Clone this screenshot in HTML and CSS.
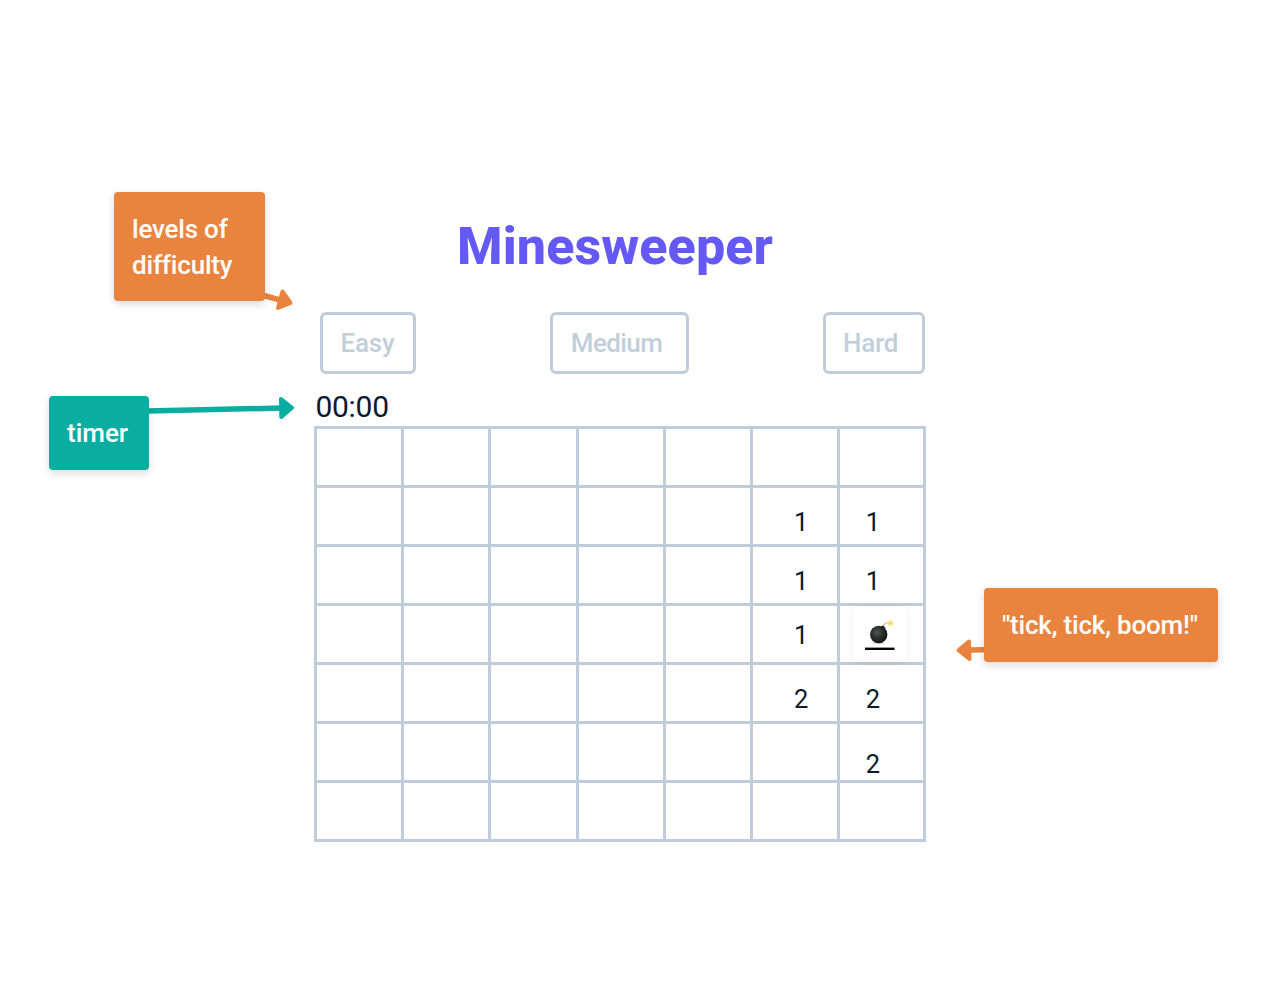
FILE: index.html
```html
<!DOCTYPE html>
<html lang="en">
<head>
<meta charset="utf-8">
<title>Minesweeper</title>
<link rel="stylesheet" href="styles.css">
</head>
<body>
<main class="game">
  <h1 class="title">Minesweeper</h1>
  <div class="levels">
    <button class="level easy">Easy</button>
    <button class="level medium">Medium</button>
    <button class="level hard">Hard</button>
  </div>
  <div class="clock">00:00</div>
  <div class="board">
    <i></i><i></i><i></i><i></i><i></i><i></i><i></i>
    <i></i><i></i><i></i><i></i><i></i><i class="near">1</i><i class="edge">1</i>
    <i></i><i></i><i></i><i></i><i></i><i class="near">1</i><i class="edge">1</i>
    <i></i><i></i><i></i><i></i><i></i><i class="near high">1</i><i class="mine"><span class="tile">
      <svg width="30" height="32" viewBox="0 0 30 32">
        <defs><radialGradient id="ball" cx=".4" cy=".38" r=".65"><stop offset="0" stop-color="#555"/><stop offset=".45" stop-color="#303232"/><stop offset="1" stop-color="#111"/></radialGradient></defs>
        <ellipse cx="14" cy="24.3" rx="6" ry="1" fill="#ddd"/>
        <path d="M17.500 8.500C18.500 5 21.500 3 25 4" fill="none" stroke="#cdbb9c" stroke-width="1.200"/>
        <path d="M22.500 1l2.500 1 2.500-1 .3 2.300.8 1.700-1 2-2.500-.6-2 .6-.5-2.500z" fill="#fbe8a0"/>
        <circle cx="25.500" cy="4" r="1.500" fill="#ffd84d"/>
        <circle cx="13.700" cy="15.500" r="8.700" fill="url(#ball)"/>
        <path d="M15.700 7.300l2.200-.9 2.500 2-.8 2z" fill="#29251f"/>
        <path d="M0 29.800h29.500" stroke="#000" stroke-width="2.400"/>
      </svg></span></i>
    <i></i><i></i><i></i><i></i><i></i><i class="near">2</i><i class="edge">2</i>
    <i></i><i></i><i></i><i></i><i></i><i></i><i class="edge low">2</i>
    <i></i><i></i><i></i><i></i><i></i><i></i><i></i>
  </div>
</main>

<svg class="arrows" width="1264" height="992" viewBox="0 0 1264 992">
  <g class="orange">
    <path class="shaft" d="M262 295l18 5"/>
    <path class="head" d="M282.500 291.500L290.500 303L278 308z"/>
    <path class="shaft" d="M986 649.700l-18 .3"/>
    <path class="head" d="M969 641.500L958.500 650.200L969.500 659z"/>
  </g>
  <g class="teal">
    <path class="shaft" d="M147 411l136-3"/>
    <path class="head" d="M281 399L292 407.700L281.300 417z"/>
  </g>
</svg>
<aside class="note levels-note"><span>levels of</span><span>difficulty</span></aside>
<aside class="note timer-note"><span>timer</span></aside>
<aside class="note boom-note"><span>"tick, tick, boom!"</span></aside>
</body>
</html>
```
FILE: styles.css
```css
* { box-sizing: border-box; }
body {
  margin: 0;
  width: 1264px;
  height: 992px;
  overflow: hidden;
  position: relative;
  background: #fff;
  color: #0b1a2e;
  font-family: Roboto, "Liberation Sans", sans-serif;
}
.game {
  width: 612px;
  margin-left: 314px;
  padding-top: 217px;
}
.title {
  margin: 0;
  height: 60px;
  padding-left: 143px;
  font-size: 52px;
  line-height: 60px;
  font-weight: 800;
  letter-spacing: 0.1px;
  white-space: nowrap;
  color: #6459f5;
}
.levels {
  display: flex;
  justify-content: space-between;
  margin: 34.500px 1px 0 5.500px;
}
.level {
  height: 62px;
  padding: 0 0 0 18px;
  border: 3px solid #c0ccd7;
  border-radius: 6px;
  background: #fff;
  color: #c2cfdb;
  font: 500 26px/57px Roboto, sans-serif;
  text-align: left;
}
.easy { width: 96px; letter-spacing: -0.2px; }
.medium { width: 139px; letter-spacing: -0.6px; }
.hard { width: 102px; padding-left: 17px; letter-spacing: -0.2px; }
.clock {
  height: 52.500px;
  padding-left: 1.500px;
  font-size: 30px;
  line-height: 65px;
  letter-spacing: -0.3px;
}
.board {
  display: grid;
  grid-template-columns: repeat(6, 84.2px) 1fr;
  grid-template-rows: repeat(7, 1fr);
  gap: 3px;
  height: 416.400px;
  padding: 3px;
  background: #c0ccd7;
}
.board i {
  min-height: 0;
  min-width: 0;
  background: #fff;
  font-style: normal;
  font-size: 25.5px;
  line-height: 68px;
}
.board .near { padding-left: 41px; }
.board .edge { padding-left: 25.5px; }
.board .high { line-height: 58px; }
.board .low { line-height: 80px; }
.board .mine { padding: 0 0 0 12.5px; }
.tile {
  display: flex;
  width: 54px;
  height: 56px;
  padding: 13px 0 0 12.5px;
  border-radius: 6px;
  background: #fff;
  box-shadow: 0 3px 12px rgba(0, 0, 0, 0.06), 0 0 2px rgba(0, 0, 0, 0.07);
}
.arrows { position: absolute; left: 0; top: 0; }
.shaft { fill: none; stroke-width: 5.5; }
.head { stroke-width: 4; stroke-linejoin: round; }
.orange { stroke: #e9843f; fill: #e9843f; }
.teal { stroke: #0aaea0; fill: #0aaea0; }
.note {
  position: absolute;
  display: flex;
  flex-direction: column;
  align-items: flex-start;
  padding: 19px 18px;
  border-radius: 4px;
  background: #e9843f;
  box-shadow: 0 3px 8px rgba(0, 0, 0, 0.15);
  color: #fff;
  font-size: 26px;
  font-weight: 500;
  line-height: 36px;
  letter-spacing: -0.2px;
  white-space: nowrap;
}
.levels-note { left: 114px; top: 192px; width: 151px; height: 109px; }
.timer-note { left: 49px; top: 396px; width: 100px; height: 73.500px; background: #0aaea0; letter-spacing: 0; }
.boom-note { left: 984px; top: 588.400px; width: 233.500px; height: 73.500px; }
```
